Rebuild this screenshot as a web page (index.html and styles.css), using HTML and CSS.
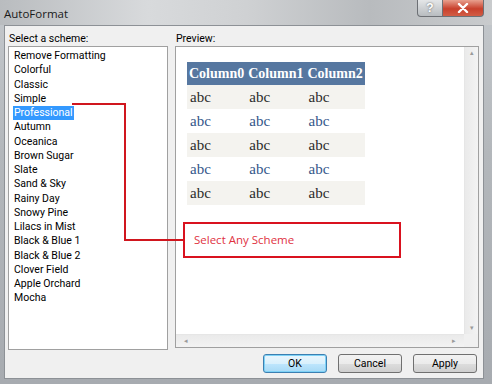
FILE: index.html
```html
<!DOCTYPE html>
<html lang="en">
<head>
    <meta charset="UTF-8">
    <title>AutoFormat</title>
    <link rel="stylesheet" href="styles.css">
</head>
<body>
    <div class="window">
        <div class="titlebar">
            <span class="title">AutoFormat</span>
            <div class="caption-buttons">
                <div class="cap-btn help">?</div>
                <div class="cap-btn close">
                    <svg width="12" height="10" viewBox="0 0 12 10"><path d="M2 1 L10 9 M10 1 L2 9" stroke="#fff" stroke-width="2.4" stroke-linecap="round"/></svg>
                </div>
            </div>
        </div>

        <div class="frame">
            <div class="dialog">
                <div class="columns">
                    <div class="col">
                        <div class="label">Select a scheme:</div>
                        <ul class="scheme-list">
                            <li>Remove Formatting</li>
                            <li>Colorful</li>
                            <li>Classic</li>
                            <li>Simple</li>
                            <li><span class="selected">Professional</span></li>
                            <li>Autumn</li>
                            <li>Oceanica</li>
                            <li>Brown Sugar</li>
                            <li>Slate</li>
                            <li>Sand &amp; Sky</li>
                            <li>Rainy Day</li>
                            <li>Snowy Pine</li>
                            <li>Lilacs in Mist</li>
                            <li>Black &amp; Blue 1</li>
                            <li>Black &amp; Blue 2</li>
                            <li>Clover Field</li>
                            <li>Apple Orchard</li>
                            <li>Mocha</li>
                        </ul>
                    </div>
                    <div class="col">
                        <div class="label">Preview:</div>
                        <div class="preview">
                            <div class="preview-area">
                                <table class="grid">
                                    <tr class="head"><th>Column0</th><th>Column1</th><th>Column2</th></tr>
                                    <tr class="odd"><td>abc</td><td>abc</td><td>abc</td></tr>
                                    <tr class="even"><td>abc</td><td>abc</td><td>abc</td></tr>
                                    <tr class="odd"><td>abc</td><td>abc</td><td>abc</td></tr>
                                    <tr class="even"><td>abc</td><td>abc</td><td>abc</td></tr>
                                    <tr class="odd"><td>abc</td><td>abc</td><td>abc</td></tr>
                                </table>
                            </div>
                            <div class="vscroll">
                                <span class="arrow">&#9652;</span>
                                <span class="arrow">&#9662;</span>
                            </div>
                            <div class="hscroll">
                                <span class="arrow">&#9666;</span>
                                <span class="arrow">&#9656;</span>
                            </div>
                            <div class="corner"></div>
                        </div>
                    </div>
                </div>

                <div class="buttons">
                    <button class="default">OK</button>
                    <button>Cancel</button>
                    <button>Apply</button>
                </div>
            </div>
        </div>

        <!-- annotation overlay -->
        <div class="callout-line"></div>
        <div class="callout-drop"></div>
        <div class="callout-link"></div>
        <div class="callout">Select Any Scheme</div>
    </div>
</body>
</html>
```

FILE: styles.css
```css
body {
    margin: 0;
    padding: 0;
    font-family: 'Liberation Sans', Arial, sans-serif;
    font-size: 11px;
    color: #000;
}

.window {
    position: relative;
    width: 492px;
    height: 384px;
    background: linear-gradient(to bottom, #c4c8cc 0%, #b3b7bb 40%, #a7abb0 100%);
    display: flex;
    flex-direction: column;
    overflow: hidden;
}

.titlebar {
    height: 25px;
    display: flex;
    align-items: flex-start;
    justify-content: space-between;
    background: linear-gradient(to right, #b9bcbf 0%, #d8dadc 30%, #cfd1d3 50%, #b8bbbe 75%, #c9cbcd 100%);
}

.title {
    padding: 6px 0 0 4px;
    font-family: 'Open Sans', 'Liberation Sans', sans-serif;
    font-size: 11.5px;
    color: #1a1a1a;
}

.caption-buttons {
    display: flex;
    margin-right: 8px;
}

.cap-btn {
    height: 16px;
    display: flex;
    align-items: center;
    justify-content: center;
    border: 1px solid #6d7075;
    border-top: none;
}

.help {
    width: 24px;
    background: linear-gradient(to bottom, #e4e6e8, #b8bcc0);
    border-radius: 0 0 0 4px;
    color: #fff;
    font-weight: bold;
    font-size: 12px;
    text-shadow: 0 0 2px #555;
}

.close {
    width: 40px;
    background: linear-gradient(to bottom, #e8a08e, #c8402c 55%, #d25d45);
    border-left: none;
    border-radius: 0 0 4px 0;
}

.frame {
    flex: 1;
    padding: 0 8px 5px 4px;
    display: flex;
}

.dialog {
    flex: 1;
    background: #f0f0f0;
    border: 1px solid #8d9196;
    padding: 5px 4px 0 3px;
    display: flex;
    flex-direction: column;
    font-family: Roboto, 'Liberation Sans', sans-serif;
    font-size: 10.5px;
}

.columns {
    display: flex;
    gap: 7px;
}

.label {
    height: 15px;
    line-height: 15px;
    padding-left: 1px;
}

.scheme-list {
    width: 158px;
    height: 300px;
    margin: 0;
    padding: 2px 0 0 0;
    list-style: none;
    background: #fff;
    border: 1px solid #a0a0a0;
    box-sizing: content-box;
}

.scheme-list li {
    height: 14.25px;
    line-height: 14px;
    padding-left: 5px;
    white-space: nowrap;
}

.scheme-list .selected {
    display: inline-block;
    background: #3399ff;
    color: #fff;
    padding: 0 1px;
    margin-left: -1px;
}

.preview {
    position: relative;
    width: 302px;
    height: 300px;
    background: #fff;
    border: 1px solid #a0a0a0;
    display: grid;
    grid-template-columns: 1fr 14px;
    grid-template-rows: 1fr 13px;
}

.preview-area {
    padding: 15px 0 0 11px;
}

.grid {
    border-collapse: collapse;
    font-family: 'Liberation Serif', 'Times New Roman', serif;
    font-size: 14px;
}

.grid th {
    background: #5677a0;
    color: #fff;
    font-weight: bold;
    height: 23px;
    padding: 0 2px;
    text-align: left;
    white-space: nowrap;
}

.grid td {
    height: 24px;
    padding: 0 3px;
    width: 53px;
    font-size: 15px;
}

.grid .odd td {
    background: #f4f3ef;
    color: #2b2b2b;
}

.grid .even td {
    background: #fff;
    color: #34578a;
}

.vscroll {
    background: linear-gradient(to right, #eaeaea, #f3f3f3);
    border-left: 1px solid #e6e6e6;
    display: flex;
    flex-direction: column;
    justify-content: space-between;
    align-items: center;
}

.hscroll {
    background: linear-gradient(to bottom, #eaeaea, #f3f3f3);
    border-top: 1px solid #e6e6e6;
    display: flex;
    justify-content: space-between;
    align-items: center;
    padding: 0 8px;
}

.arrow {
    font-size: 7px;
    color: #9a9a9a;
    line-height: 12px;
}

.corner {
    background: #f0f0f0;
}

.buttons {
    display: flex;
    justify-content: flex-end;
    gap: 11px;
    padding: 4px 2px 0 0;
}

button {
    width: 64px;
    height: 19px;
    padding: 0;
    font-family: Roboto, 'Liberation Sans', sans-serif;
    font-size: 10.5px;
    color: #000;
    background: linear-gradient(to bottom, #f2f2f2 0%, #ebebeb 50%, #dddddd 51%, #cfcfcf 100%);
    border: 1px solid #707070;
    border-radius: 3px;
}

button.default {
    border-color: #3c7fb1;
    background: linear-gradient(to bottom, #eaf6fd 0%, #d9f0fc 50%, #bee6fd 51%, #a7d9f5 100%);
    box-shadow: inset 0 0 0 1px #7ed2f6;
}

/* red annotation */
.callout-line {
    position: absolute;
    left: 72px;
    top: 103px;
    width: 54px;
    height: 2px;
    background: #d0161e;
}

.callout-drop {
    position: absolute;
    left: 124px;
    top: 103px;
    width: 2px;
    height: 138px;
    background: #d0161e;
}

.callout-link {
    position: absolute;
    left: 124px;
    top: 239px;
    width: 60px;
    height: 2px;
    background: #d0161e;
}

.callout {
    position: absolute;
    left: 183px;
    top: 222px;
    width: 205px;
    height: 32px;
    border: 2px solid #d9121f;
    background: #fff;
    color: #e0323f;
    font-family: 'Open Sans', 'Liberation Sans', sans-serif;
    font-size: 11.5px;
    line-height: 32px;
    padding-left: 9px;
    box-sizing: content-box;
}
```
